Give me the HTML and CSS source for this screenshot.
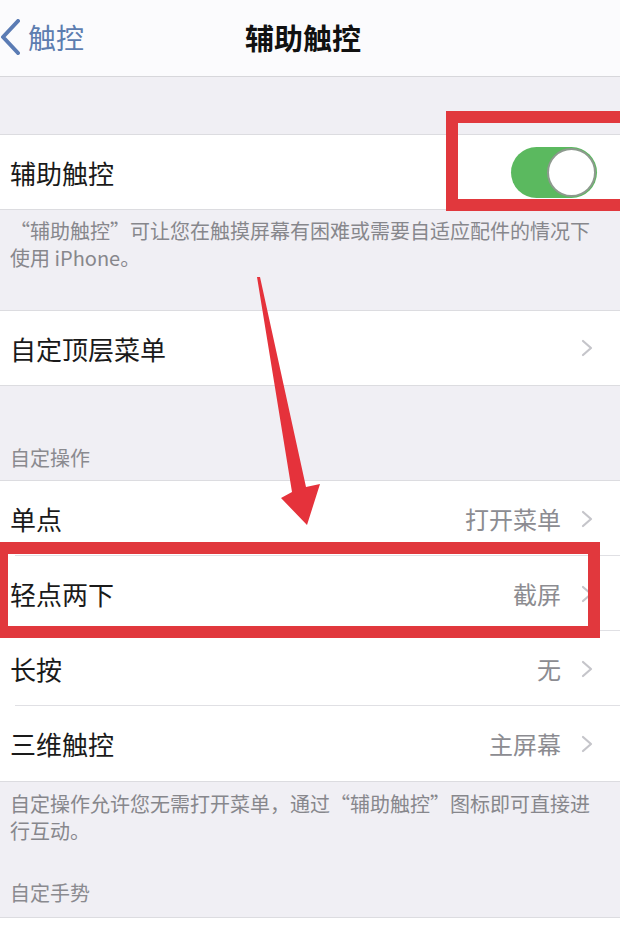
FILE: index.html
```html
<!DOCTYPE html>
<html lang="zh-CN">
<head>
<meta charset="utf-8">
<title>辅助触控</title>
<link rel="stylesheet" href="styles.css">
</head>
<body>
<div class="screen">
  <header class="nav">
    <a class="back">
      <svg class="back-icon" width="20" height="36" viewBox="0 0 20 36"><path d="M18 2 L3 18 L18 34" fill="none" stroke="#5a7bb4" stroke-width="4" stroke-linecap="round" stroke-linejoin="round"/></svg>
      <span>触控</span>
    </a>
    <h1 class="title">辅助触控</h1>
  </header>

  <section class="group first">
    <div class="row">
      <span class="label">辅助触控</span>
      <span class="switch"><span class="knob"></span></span>
    </div>
  </section>
  <p class="note">“辅助触控”可让您在触摸屏幕有困难或需要自适应配件的情况下<br>使用 iPhone。</p>

  <section class="group">
    <div class="row">
      <span class="label">自定顶层菜单</span>
      <span class="detail"><svg class="chev" width="12" height="18" viewBox="0 0 12 18"><path d="M2 2 L10 9 L2 16" fill="none" stroke="#c5c5ca" stroke-width="2.2" stroke-linecap="round" stroke-linejoin="round"/></svg></span>
    </div>
  </section>

  <h2 class="section-head">自定操作</h2>
  <section class="group">
    <div class="row sep">
      <span class="label">单点</span>
      <span class="detail"><span class="value">打开菜单</span><svg class="chev" width="12" height="18" viewBox="0 0 12 18"><path d="M2 2 L10 9 L2 16" fill="none" stroke="#c5c5ca" stroke-width="2.2" stroke-linecap="round" stroke-linejoin="round"/></svg></span>
    </div>
    <div class="row sep">
      <span class="label">轻点两下</span>
      <span class="detail"><span class="value">截屏</span><svg class="chev" width="12" height="18" viewBox="0 0 12 18"><path d="M2 2 L10 9 L2 16" fill="none" stroke="#c5c5ca" stroke-width="2.2" stroke-linecap="round" stroke-linejoin="round"/></svg></span>
    </div>
    <div class="row sep">
      <span class="label">长按</span>
      <span class="detail"><span class="value">无</span><svg class="chev" width="12" height="18" viewBox="0 0 12 18"><path d="M2 2 L10 9 L2 16" fill="none" stroke="#c5c5ca" stroke-width="2.2" stroke-linecap="round" stroke-linejoin="round"/></svg></span>
    </div>
    <div class="row">
      <span class="label">三维触控</span>
      <span class="detail"><span class="value">主屏幕</span><svg class="chev" width="12" height="18" viewBox="0 0 12 18"><path d="M2 2 L10 9 L2 16" fill="none" stroke="#c5c5ca" stroke-width="2.2" stroke-linecap="round" stroke-linejoin="round"/></svg></span>
    </div>
  </section>
  <p class="note tight">自定操作允许您无需打开菜单，通过“辅助触控”图标即可直接进<br>行互动。</p>

  <h2 class="section-head small">自定手势</h2>
  <section class="group">
    <div class="row"></div>
  </section>

  <div class="mark mark-toggle"></div>
  <div class="mark mark-row"></div>
  <svg class="arrow" width="620" height="927" viewBox="0 0 620 927">
    <polygon points="257,277 260,277 306,487 320,484 307,525 281,498 292,492" fill="#e5323b"/>
  </svg>
</div>
</body>
</html>
```

FILE: styles.css
```css
* { box-sizing: border-box; }
html, body {
  margin: 0;
  padding: 0;
  width: 620px;
  height: 927px;
  overflow: hidden;
  background: #f0eff4;
}
body {
  font-family: "Noto Sans CJK SC", "Noto Sans", sans-serif;
  color: #1c1c1e;
}
.screen {
  position: relative;
  width: 620px;
  height: 927px;
  overflow: hidden;
}
.nav {
  height: 77px;
  background: #fbfbfd;
  border-bottom: 1px solid #d7d7db;
  display: grid;
  grid-template-columns: 1fr auto 1fr;
  align-items: center;
  padding-right: 14px;
}
.back {
  display: flex;
  align-items: center;
  gap: 8px;
  color: #5d7db0;
  font-size: 28px;
  line-height: 1;
  padding-bottom: 2px;
}
.back-icon { display: block; }
.title {
  margin: 0;
  font-size: 29px;
  font-weight: 700;
  color: #111;
  padding-bottom: 2px;
}
.group {
  background: #fff;
  border-top: 1px solid #dcdce0;
  border-bottom: 1px solid #dcdce0;
}
.group.first { margin-top: 57px; }
.row {
  position: relative;
  height: 75px;
  display: flex;
  align-items: center;
  justify-content: space-between;
  padding: 0 23px 0 10px;
}
.group .row:only-child { height: 74px; }
.row.sep::after {
  content: "";
  position: absolute;
  left: 15px;
  right: 0;
  bottom: 0;
  height: 1px;
  background: #e0e0e4;
}
.label {
  font-size: 26px;
  color: #1a1a1a;
}
.detail {
  display: flex;
  align-items: center;
  gap: 20px;
  padding-right: 4px;
}
.value {
  font-size: 24px;
  color: #8c8c91;
}
.chev { display: block; }
.switch {
  width: 86px;
  height: 51px;
  border-radius: 26px;
  background: #5bb95f;
  display: flex;
  justify-content: flex-end;
  align-items: center;
  padding: 1px;
}
.knob {
  width: 49px;
  height: 49px;
  border-radius: 50%;
  background: #fff;
  border: 2px solid #8d9a8e;
}
.note {
  margin: 0;
  padding: 7px 15px 39px 10px;
  font-size: 20px;
  line-height: 27px;
  color: #87878c;
}
.note.tight { padding-top: 8px; padding-bottom: 0; }
.section-head {
  margin: 0;
  padding: 58px 10px 9px;
  font-size: 20px;
  line-height: 27px;
  font-weight: 400;
  color: #8a8a8f;
}
.section-head.small { padding-top: 35px; padding-bottom: 11px; }
.mark {
  position: absolute;
  border: 12px solid #e1383d;
}
.mark-toggle {
  left: 446px;
  top: 111px;
  width: 186px;
  height: 100px;
}
.mark-row {
  left: -4px;
  top: 542px;
  width: 604px;
  height: 96px;
}
.arrow {
  position: absolute;
  left: 0;
  top: 0;
  pointer-events: none;
}
```
